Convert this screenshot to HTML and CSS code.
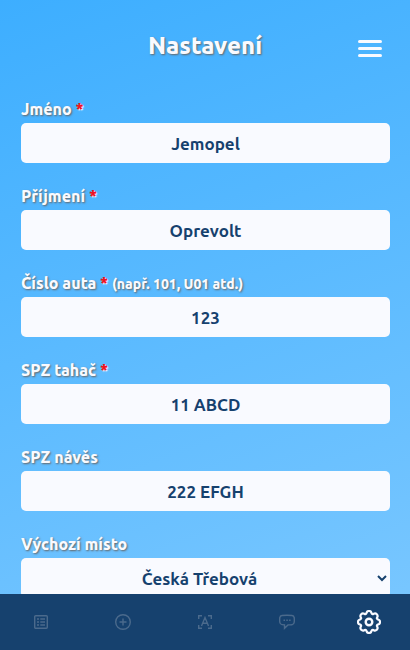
FILE: index.html
```html
<!DOCTYPE html>
<html lang="cs">
<head>
<meta charset="utf-8">
<meta name="viewport" content="width=device-width, initial-scale=1">
<title>Nastavení</title>
<link rel="stylesheet" href="styles.css">
</head>
<body>
<header class="header">
  <h1 class="title">Nastavení</h1>
  <button class="menu" type="button" aria-label="Menu">
    <span class="menu-line"></span><span class="menu-line"></span><span class="menu-line"></span>
  </button>
</header>
<main>
  <form class="form">
    <div class="field">
      <label class="label" for="name">Jméno <span class="required">*</span></label>
      <input class="control" id="name" type="text" value="Jemopel">
    </div>
    <div class="field">
      <label class="label" for="surname">Příjmení <span class="required">*</span></label>
      <input class="control" id="surname" type="text" value="Oprevolt">
    </div>
    <div class="field">
      <label class="label" for="number">Číslo auta <span class="required">*</span> <small class="hint">(např. 101, U01 atd.)</small></label>
      <input class="control" id="number" type="text" value="123">
    </div>
    <div class="field">
      <label class="label" for="truck">SPZ tahač <span class="required">*</span></label>
      <input class="control" id="truck" type="text" value="11 ABCD">
    </div>
    <div class="field">
      <label class="label" for="trailer">SPZ návěs</label>
      <input class="control" id="trailer" type="text" value="222 EFGH">
    </div>
    <div class="field">
      <label class="label" for="place">Výchozí místo</label>
      <select class="control" id="place"><option>Česká Třebová</option></select>
    </div>
  </form>
</main>
<nav class="tabs">
  <a class="tab" href="#list" aria-label="Seznam">
    <svg class="icon" viewBox="0 0 16 16"><rect x="1.7" y="1.7" width="12.6" height="12.6" rx="1"/><path d="M4 5h2M7.3 5H12M4 8h2M7.3 8H12M4 11h2M7.3 11H12"/></svg>
  </a>
  <a class="tab" href="#add" aria-label="Přidat">
    <svg class="icon" viewBox="0 0 16 16"><circle cx="8" cy="8" r="7.3"/><path d="M8 4.5v7M4.5 8h7"/></svg>
  </a>
  <a class="tab" href="#scan" aria-label="Skenovat">
    <svg class="icon" viewBox="0 0 16 16"><path d="M1.7 5V1.7H5M11 1.7h3.3V5M14.3 11v3.3H11M5 14.3H1.7V11M4.5 12 8 3.5l3.5 8.5M5.8 9.2h4.4"/></svg>
  </a>
  <a class="tab" href="#messages" aria-label="Zprávy">
    <svg class="icon" viewBox="0 0 16 16"><path d="M3 1.5Q8 .9 13 1.5 15 1.7 15.2 3.7q.3 2.3 0 4.6Q15 10.500 13 10.700q-2 .2-4 .2L5.500 14.300v-3.500L3 10.600Q1 10.400.8 8.300q-.3-2.300 0-4.600Q1 1.700 3 1.500Z"/><path d="M4.500 6.200H6M7.300 6.200h1.500M10.100 6.200h1.500"/></svg>
  </a>
  <a class="tab tab-active" href="#settings" aria-label="Nastavení" aria-current="page">
    <svg class="icon icon-large" viewBox="0 0 16 16"><g transform="translate(.64 .64) scale(.92)"><path d="M9.796 1.343c-.527-1.790-3.065-1.790-3.592 0l-.094.319a.873.873 0 0 1-1.255.520l-.292-.160c-1.640-.892-3.433.902-2.540 2.541l.159.292a.873.873 0 0 1-.520 1.255l-.319.094c-1.790.527-1.790 3.065 0 3.592l.319.094a.873.873 0 0 1 .520 1.255l-.160.292c-.892 1.640.901 3.434 2.541 2.540l.292-.159a.873.873 0 0 1 1.255.520l.094.319c.527 1.790 3.065 1.790 3.592 0l.094-.319a.873.873 0 0 1 1.255-.520l.292.160c1.640.893 3.434-.902 2.540-2.541l-.159-.292a.873.873 0 0 1 .520-1.255l.319-.094c1.790-.527 1.790-3.065 0-3.592l-.319-.094a.873.873 0 0 1-.520-1.255l.160-.292c.893-1.640-.902-3.433-2.541-2.540l-.292.159a.873.873 0 0 1-1.255-.520z"/></g><circle cx="8" cy="8" r="2.2"/></svg>
  </a>
</nav>
</body>
</html>
```
FILE: styles.css
```css
* {
  box-sizing: border-box;
}

body {
  margin: 0;
  min-height: 100vh;
  padding-bottom: 56px;
  font-family: Ubuntu, "Noto Sans", sans-serif;
  color: #f9faff;
  background: linear-gradient(160deg, #3daeff, #7cc8ff) fixed;
  overflow-x: hidden;
  scrollbar-width: none;
}

.header {
  display: grid;
  grid-template-columns: 1fr auto 1fr;
  align-items: center;
  height: 96px;
  padding: 0 28px;
}

.title {
  grid-column: 2;
  margin: 0;
  font-size: 24px;
  font-weight: 800;
  line-height: 32px;
  padding-bottom: 4px;
  text-shadow: 1px 1px 2px #666;
}

.menu {
  justify-self: end;
  display: flex;
  flex-direction: column;
  gap: 4px;
  width: 24px;
  padding: 0;
  border: 0;
  background: none;
}

.menu-line {
  height: 3px;
  border-radius: 2px;
  background: #f9faff;
}

.form {
  display: flex;
  flex-direction: column;
  gap: 23px;
  padding: 3px 20px 24px 21px;
}

.field {
  display: flex;
  flex-direction: column;
}

.label {
  height: 24px;
  font-size: 16px;
  line-height: 21px;
  font-weight: 800;
  text-shadow: 1px 1px 2px #666;
}

.required {
  color: #f01020;
  text-shadow: 1px 1px 1px #f9faff;
}

.hint {
  font-size: 14px;
}

.control {
  width: 100%;
  height: 40px;
  padding: 0;
  border: 0;
  border-radius: 5px;
  color: #16416e;
  background: #f9faff;
  font: 600 17px Ubuntu, "Noto Sans", sans-serif;
  text-align: center;
  text-align-last: center;
}

.tabs {
  position: fixed;
  inset: auto 0 0;
  display: flex;
  height: 56px;
  background: #16416e;
}

.tab {
  flex: 1;
  display: flex;
  align-items: center;
  justify-content: center;
  color: #4b6a8c;
}

.tab-active {
  color: #f9faff;
}

.icon {
  width: 16px;
  height: 16px;
  fill: none;
  stroke: currentColor;
  stroke-width: 1.4;
}

.icon-large {
  width: 24px;
  height: 24px;
  stroke-width: 1.6;
}
```
